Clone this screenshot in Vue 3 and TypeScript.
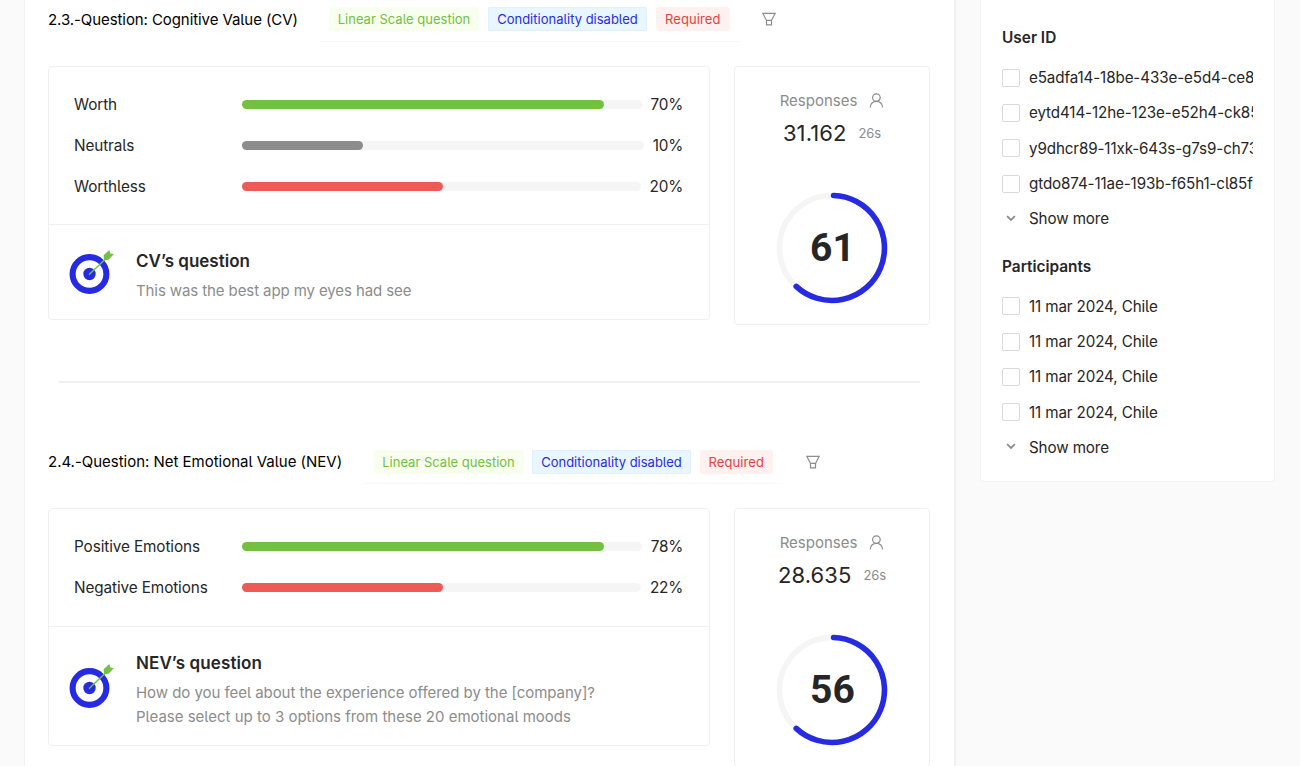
<script setup lang="ts">
interface Bar {
  label: string
  value: string
  color: string
  fill: number
}

interface Question {
  id: string
  title: string
  bars: Bar[]
  heading: string
  lines: string[]
  responses: string
  time: string
  score: string
}

interface Filter {
  title: string
  options: string[]
}

const questions: Question[] = [
  {
    id: 'cv',
    title: '2.3.-Question: Cognitive Value (CV)',
    bars: [
      { label: 'Worth', value: '70%', color: '#72c140', fill: 361.5 },
      { label: 'Neutrals', value: '10%', color: '#8c8c8c', fill: 120.5 },
      { label: 'Worthless', value: '20%', color: '#ee5b56', fill: 201 },
    ],
    heading: 'CV’s question',
    lines: ['This was the best app my eyes had see'],
    responses: '31.162',
    time: '26s',
    score: '61',
  },
  {
    id: 'nev',
    title: '2.4.-Question: Net Emotional Value (NEV)',
    bars: [
      { label: 'Positive Emotions', value: '78%', color: '#72c140', fill: 361.5 },
      { label: 'Negative Emotions', value: '22%', color: '#ee5b56', fill: 201 },
    ],
    heading: 'NEV’s question',
    lines: [
      'How do you feel about the experience offered by the [company]?',
      'Please select up to 3 options from these 20 emotional moods',
    ],
    responses: '28.635',
    time: '26s',
    score: '56',
  },
]

const filters: Filter[] = [
  {
    title: 'User ID',
    options: [
      'e5adfa14-18be-433e-e5d4-ce85',
      'eytd414-12he-123e-e52h4-ck85',
      'y9dhcr89-11xk-643s-g7s9-ch73',
      'gtdo874-11ae-193b-f65h1-cl85f',
    ],
  },
  {
    title: 'Participants',
    options: ['11 mar 2024, Chile', '11 mar 2024, Chile', '11 mar 2024, Chile', '11 mar 2024, Chile'],
  },
]
</script>

<template>
  <div class="page">
    <main class="main">
      <section v-for="q in questions" :key="q.id" class="question" :class="q.id">
        <header class="head">
          <h2 class="title">{{ q.title }}</h2>
          <div class="tags">
            <span class="tag green">Linear Scale question</span>
            <span class="tag blue">Conditionality disabled</span>
            <span class="tag red">Required</span>
          </div>
          <svg class="funnel" width="14" height="14" viewBox="0 0 14 14">
            <path d="M0.9 1.4H13.1L9.5 8.4H4.5ZM4.5 8.4V12.9H9.5V8.4" />
          </svg>
        </header>

        <div class="cards">
          <div class="card result">
            <div class="bars">
              <div v-for="b in q.bars" :key="b.label" class="bar">
                <span class="label">{{ b.label }}</span>
                <div class="track">
                  <div class="fill" :style="{ width: b.fill + 'px', background: b.color }"></div>
                </div>
                <span class="value">{{ b.value }}</span>
              </div>
            </div>
            <div class="about">
              <svg class="target" width="46" height="46" viewBox="0 0 46 46">
                <circle cx="20.5" cy="25" r="16.9" fill="none" stroke="#262ae0" stroke-width="6.1" />
                <circle cx="20.5" cy="25" r="6.2" fill="#262ae0" />
                <path d="M20.4 25.2L37 9.5" stroke="#72c140" stroke-width="1.4" stroke-linecap="round" />
                <path d="M35 11.2L34.6 6.3L40.3 1L41.3 4.4L45 5.1L39.4 10.8Z" fill="#72c140" />
              </svg>
              <div class="copy">
                <h3>{{ q.heading }}</h3>
                <p v-for="l in q.lines" :key="l">{{ l }}</p>
              </div>
            </div>
          </div>

          <div class="card stats">
            <div class="caption">
              <span>Responses</span>
              <svg width="15" height="15" viewBox="0 0 15 15">
                <circle cx="7.4" cy="4.6" r="3.8" />
                <path d="M1.2 14.5C1.5 10.9 4 8.4 7.4 8.4S13.3 10.9 13.6 14.5" />
              </svg>
            </div>
            <div class="count">
              <span class="number">{{ q.responses }}</span>
              <span class="time">{{ q.time }}</span>
            </div>
            <div class="ring">
              <svg width="112" height="112" viewBox="0 0 112 112">
                <circle cx="56" cy="56" r="52.5" stroke="#f5f5f5" />
                <path d="M57.6 3.5A52.5 52.5 0 1 1 20.2 94.4" stroke="#262ae0" stroke-linecap="round" />
              </svg>
              <span class="score">{{ q.score }}</span>
            </div>
          </div>
        </div>
      </section>
    </main>

    <aside class="side">
      <div v-for="f in filters" :key="f.title" class="group">
        <h4>{{ f.title }}</h4>
        <label v-for="(o, i) in f.options" :key="i" class="option">
          <span class="box"></span>
          <span class="text">{{ o }}</span>
        </label>
        <div class="option">
          <svg class="chevron" width="18" height="18" viewBox="0 0 18 18">
            <path d="M5.1 6.2L9 9.9L12.9 6.2" />
          </svg>
          <span class="text">Show more</span>
        </div>
      </div>
    </aside>
  </div>
</template>

<style>
body {
  background: #fafafa;
}
</style>

<style scoped>
.page {
  display: flex;
  align-items: flex-start;
  height: 766px;
  overflow: hidden;
  box-sizing: border-box;
  padding-left: 24px;
  font-family: Inter, "Liberation Sans", sans-serif;
  font-feature-settings: "cv05";
  color: #262626;
}
h2, h3, h4, p {
  margin: 0;
}
.main {
  flex: none;
  width: 932px;
  height: 766px;
  box-sizing: border-box;
  overflow: hidden;
  padding-left: 23px;
  background: #fff;
  border-left: 1px solid #f2f2f2;
  border-right: 2px solid #f0f0f0;
}
.question {
  position: relative;
  width: 883px;
}
.cv {
  height: 443px;
}
.cv::after {
  content: "";
  position: absolute;
  left: 11px;
  right: 11px;
  top: 381px;
  height: 2px;
  background: #f0f0f0;
}
.head {
  display: flex;
  align-items: flex-start;
  height: 66px;
}
.nev .head {
  height: 65px;
}
.title {
  width: 272px;
  padding-top: 8px;
  font-size: 15px;
  font-weight: 400;
  line-height: 23px;
  letter-spacing: -0.08px;
  color: #000;
  white-space: nowrap;
}
.nev .title {
  width: 316.5px;
  line-height: 22px;
  letter-spacing: -0.02px;
}
.tags {
  display: flex;
  gap: 9px;
  height: 34px;
  padding: 7px 10px 0 9px;
  border-bottom: 1px solid #f7f7f7;
}
.nev .tags {
  height: 33px;
}
.tag {
  height: 24px;
  box-sizing: border-box;
  border-radius: 3px;
  text-align: center;
  font-size: 13px;
  line-height: 24px;
  white-space: nowrap;
}
.green {
  width: 150px;
  background: #f9ffef;
  color: #72c140;
}
.blue {
  width: 159px;
  background: #e8f6ff;
  box-shadow: inset 0 0 0 1px #e2effe;
  border-radius: 2px;
  color: #2b2be0;
}
.red {
  width: 73.5px;
  background: #fef1f0;
  color: #e8403d;
  letter-spacing: 0.07px;
}
.nev .blue,
.nev .red {
  margin-left: -0.5px;
}
.funnel {
  margin: 12px 0 0 22.5px;
}
.funnel path {
  fill: none;
  stroke: #8c8c8c;
  stroke-width: 1.2;
}
.cards {
  display: flex;
  align-items: flex-start;
  gap: 24px;
}
.card {
  box-sizing: border-box;
  border: 1px solid #f0f0f0;
  border-radius: 4px;
  background: #fff;
}
.result {
  width: 662px;
}
.bars {
  height: 158px;
  box-sizing: border-box;
  padding: 17px 26px 0 25px;
  border-bottom: 1px solid #f0f0f0;
}
.nev .bars {
  height: 118px;
}
.bar {
  display: flex;
  align-items: center;
  height: 41px;
}
.label {
  width: 168px;
  font-size: 15.3px;
  letter-spacing: -0.1px;
}
.track {
  flex: 1;
  height: 9px;
  border-radius: 4.5px;
  background: #f5f5f5;
}
.fill {
  height: 9px;
  border-radius: 4.5px;
}
.value {
  margin-left: 9px;
  font-size: 15.3px;
  letter-spacing: -0.2px;
}
.about {
  display: flex;
  align-items: flex-start;
  height: 93.5px;
}
.nev .about {
  height: 117.5px;
}
.target {
  flex: none;
  margin: 24px 0 0 20px;
}
.nev .target {
  margin-top: 36px;
}
.copy {
  margin-left: 21px;
  padding-top: 24px;
}
.copy h3 {
  margin-bottom: 6px;
  font-size: 17px;
  font-weight: 600;
  line-height: 24px;
}
.nev h3 {
  letter-spacing: 0.1px;
}
.copy p {
  font-size: 15px;
  line-height: 24px;
  letter-spacing: -0.1px;
  color: #8c8c8c;
}
.nev p {
  letter-spacing: -0.05px;
}
.nev p + p {
  letter-spacing: 0;
}
.stats {
  display: flex;
  flex-direction: column;
  align-items: center;
  width: 196px;
  height: 259px;
}
.caption {
  display: flex;
  align-items: center;
  gap: 12px;
  height: 23px;
  margin-top: 22px;
  font-size: 15px;
  color: #8c8c8c;
}
.caption svg {
  fill: none;
  stroke: #8c8c8c;
  stroke-width: 1.2;
}
.count {
  display: flex;
  align-items: center;
  gap: 12px;
  height: 40px;
  margin-top: 1px;
}
.number {
  font-size: 22px;
  letter-spacing: 0.1px;
}
.time {
  font-size: 13px;
  letter-spacing: -0.1px;
  color: #8c8c8c;
}
.ring {
  position: relative;
  width: 112px;
  height: 112px;
  margin-top: 38.7px;
}
.nev .ring {
  margin-top: 39px;
}
.ring svg {
  display: block;
  fill: none;
  stroke-width: 5.6;
}
.score {
  position: absolute;
  left: 34px;
  top: 33px;
  font: 700 39px/46px Roboto, sans-serif;
}
.side {
  flex: none;
  width: 295px;
  height: 482px;
  box-sizing: border-box;
  margin-left: 24px;
  padding: 20px 21px 0;
  background: #fff;
  border: 1px solid #f2f2f2;
  border-top: 0;
  border-radius: 0 0 4px 4px;
}
.group {
  height: 228.6px;
}
.side h4 {
  height: 40px;
  font-size: 15.4px;
  font-weight: 600;
  line-height: 35px;
}
.option {
  display: flex;
  align-items: center;
  height: 35.3px;
  overflow: hidden;
}
.box {
  flex: none;
  width: 18px;
  height: 18px;
  box-sizing: border-box;
  border: 1px solid #d9d9d9;
  border-radius: 2px;
}
.text {
  flex: 1;
  margin-left: 9px;
  padding-top: 1px;
  overflow: hidden;
  font-size: 15.2px;
  line-height: 24px;
  letter-spacing: -0.12px;
  white-space: nowrap;
}
.chevron {
  flex: none;
}
.chevron path {
  fill: none;
  stroke: #8c8c8c;
  stroke-width: 1.8;
}
</style>
